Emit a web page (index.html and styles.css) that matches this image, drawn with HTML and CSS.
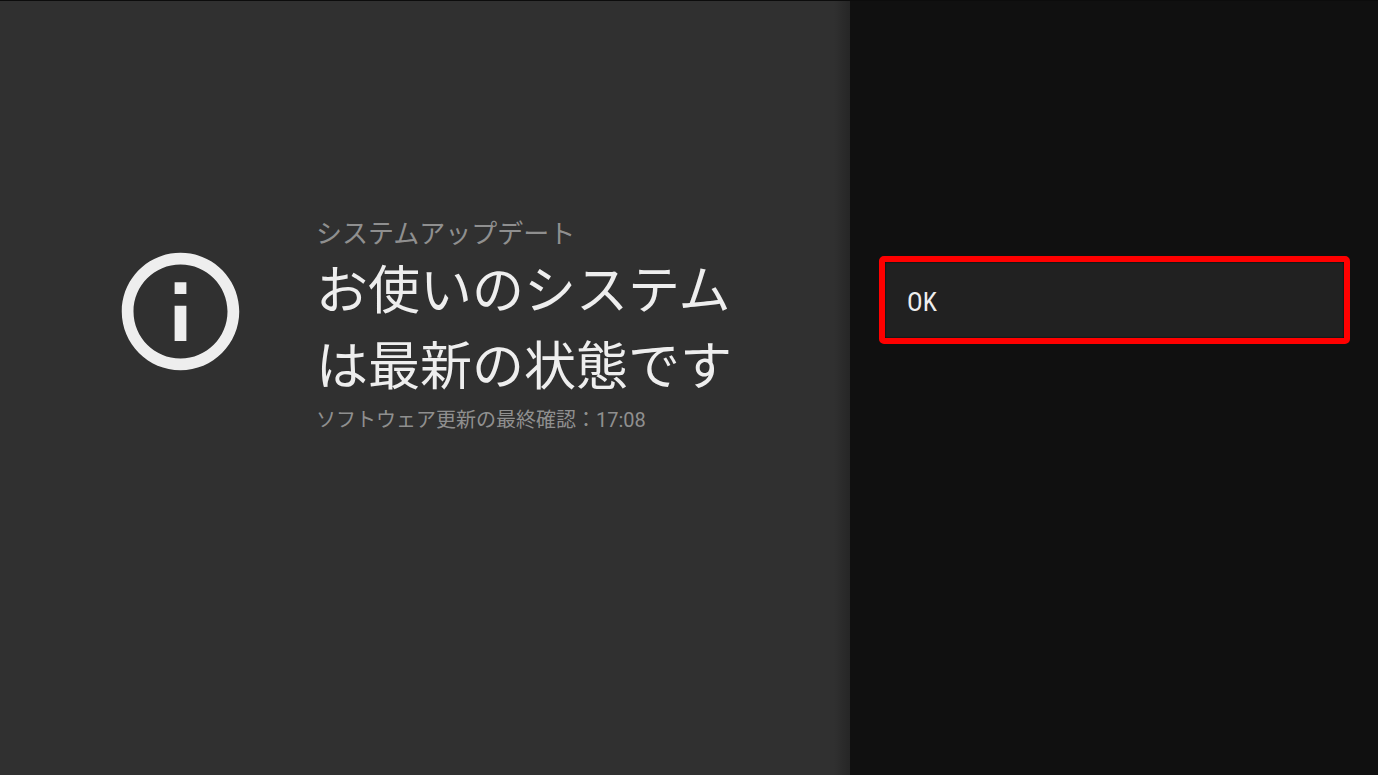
FILE: index.html
```html
<!DOCTYPE html>
<html lang="ja">
<head>
  <meta charset="UTF-8">
  <meta name="viewport" content="width=device-width, initial-scale=1.0">
  <title>システムアップデート</title>
  <link rel="stylesheet" href="styles.css">
</head>
<body>

<div class="pantalla">
  <main class="info">
    <svg class="icono" viewBox="0 0 24 24" aria-hidden="true">
      <path d="M11 7h2v2h-2zm0 4h2v6h-2zm1-9C6.48 2 2 6.48 2 12s4.48 10 10 10 10-4.48 10-10S17.52 2 12 2zm0 18c-4.41 0-8-3.59-8-8s3.59-8 8-8 8 3.59 8 8-3.59 8-8 8z"/>
    </svg>
    <div class="textos">
      <p class="seccion">システムアップデート</p>
      <h1>お使いのシステムは最新の状態です</h1>
      <p class="detalle">ソフトウェア更新の最終確認：17:08</p>
    </div>
  </main>

  <aside class="acciones">
    <button type="button">OK</button>
  </aside>
</div>

</body>
</html>
```
FILE: styles.css
```css
* { box-sizing: border-box; }
body {
  margin: 0;
  background: #101010;
  color: #eee;
  font-family: Roboto, "Noto Sans CJK JP", sans-serif;
}
.pantalla {
  display: grid;
  grid-template-columns: 850fr 528fr;
  min-height: 100vh;
  border-top: 1px solid #0c0c0c;
}
.info {
  display: flex;
  align-items: flex-start;
  padding: 213px 112px 40px 110px;
  background: linear-gradient(to left, #262626, #303030 16px);
}
.icono {
  flex: none;
  width: 141px;
  height: 141px;
  margin: 27px 65px 0 0;
  fill: #eee;
}
.textos { flex: 1; }
.textos p, h1 { margin: 0; font-weight: 400; }
.textos p { color: #8f8f8f; }
.textos .seccion { font-size: 26px; line-height: 40px; }
h1 { font-size: 52px; line-height: 76px; }
.textos .detalle { font-size: 20px; line-height: 28px; }

.acciones { padding: 255px 28px 40px 29px; }
.acciones button {
  display: block;
  width: 100%;
  height: 88px;
  padding: 4px 22px 0;
  border: 6px solid #f00;
  border-radius: 5px;
  background: #212121;
  box-shadow: inset 0 0 2px #000;
  color: #eee;
  font-family: "Roboto Condensed", Roboto, sans-serif;
  font-size: 26px;
  text-align: left;
}
```
